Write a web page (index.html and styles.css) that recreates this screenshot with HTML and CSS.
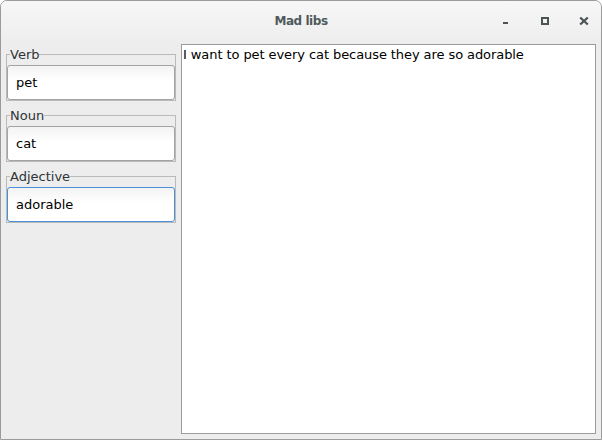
FILE: index.html
```html
<!DOCTYPE html>
<html>
<head>
<meta charset="utf-8">
<title>Mad libs</title>
<link rel="stylesheet" href="styles.css">
</head>
<body>
<div class="window">
  <header class="titlebar">
    <span class="spacer"></span>
    <span class="title">Mad libs</span>
    <div class="controls">
      <svg class="btn" width="16" height="16" viewBox="0 0 16 16"><rect x="5" y="9" width="5" height="2" fill="#4d5456"/></svg>
      <svg class="btn" width="16" height="16" viewBox="0 0 16 16"><rect x="5" y="5" width="6" height="6" fill="none" stroke="#4d5456" stroke-width="2"/></svg>
      <svg class="btn" width="16" height="16" viewBox="0 0 16 16"><path d="M4.2 4.5 L11.8 11.5 M11.8 4.5 L4.2 11.5" stroke="#4d5456" stroke-width="2.3" fill="none"/></svg>
    </div>
  </header>
  <div class="content">
    <aside class="sidebar">
      <fieldset class="group">
        <legend class="label">Verb</legend>
        <div class="entry">pet</div>
      </fieldset>
      <fieldset class="group">
        <legend class="label">Noun</legend>
        <div class="entry">cat</div>
      </fieldset>
      <fieldset class="group">
        <legend class="label">Adjective</legend>
        <div class="entry focused">adorable</div>
      </fieldset>
    </aside>
    <div class="textview">I want to pet every cat because they are so adorable</div>
  </div>
</div>
</body>
</html>
```
FILE: styles.css
```css
html, body {
  margin: 0;
  padding: 0;
  background: #ffffff;
}
body {
  font-family: "DejaVu Sans", sans-serif;
  font-size: 13px;
  color: #000;
}
.window {
  width: 602px;
  height: 440px;
  box-sizing: border-box;
  border: 1px solid #9b9b9b;
  border-radius: 7px 7px 0 0;
  background: #ededed;
  display: flex;
  flex-direction: column;
  overflow: hidden;
}
.titlebar {
  height: 43px;
  box-sizing: border-box;
  padding: 0 9px 3px 9px;
  display: grid;
  grid-template-columns: 1fr auto 1fr;
  align-items: center;
  background: linear-gradient(#f7f7f7, #ededed);
  flex: none;
}
.title {
  font-family: "DejaVu Sans", sans-serif;
  font-weight: bold;
  font-size: 12px;
  letter-spacing: -0.45px;
  color: #505a5c;
  line-height: 15px;
}
.controls {
  justify-self: end;
  display: flex;
  gap: 23px;
  align-items: center;
}
.btn {
  display: block;
}
.content {
  flex: 1;
  display: flex;
  padding: 0 5px 5px 0;
}
.sidebar {
  width: 170px;
  padding: 3px 5px 0 5px;
  display: flex;
  flex-direction: column;
  gap: 7px;
}
.group {
  margin: 0;
  padding: 3px 0 0 0;
  border: 1px solid #bababa;
  min-width: 0;
}
.label {
  padding: 0;
  margin-left: 3px;
  line-height: 15px;
  color: #2e3436;
}
.entry {
  height: 35px;
  box-sizing: border-box;
  border: 1px solid #a3a3a3;
  border-radius: 3px;
  background: linear-gradient(#f3f3f3, #ffffff 45%);
  padding: 0 8px;
  display: flex;
  align-items: center;
  color: #000;
}
.entry.focused {
  border-color: #4a90d9;
}
.textview {
  flex: 1;
  background: #ffffff;
  border: 1px solid #9b9b9b;
  padding: 2px 1px 1px 1px;
  line-height: 15px;
  letter-spacing: -0.08px;
}
```
